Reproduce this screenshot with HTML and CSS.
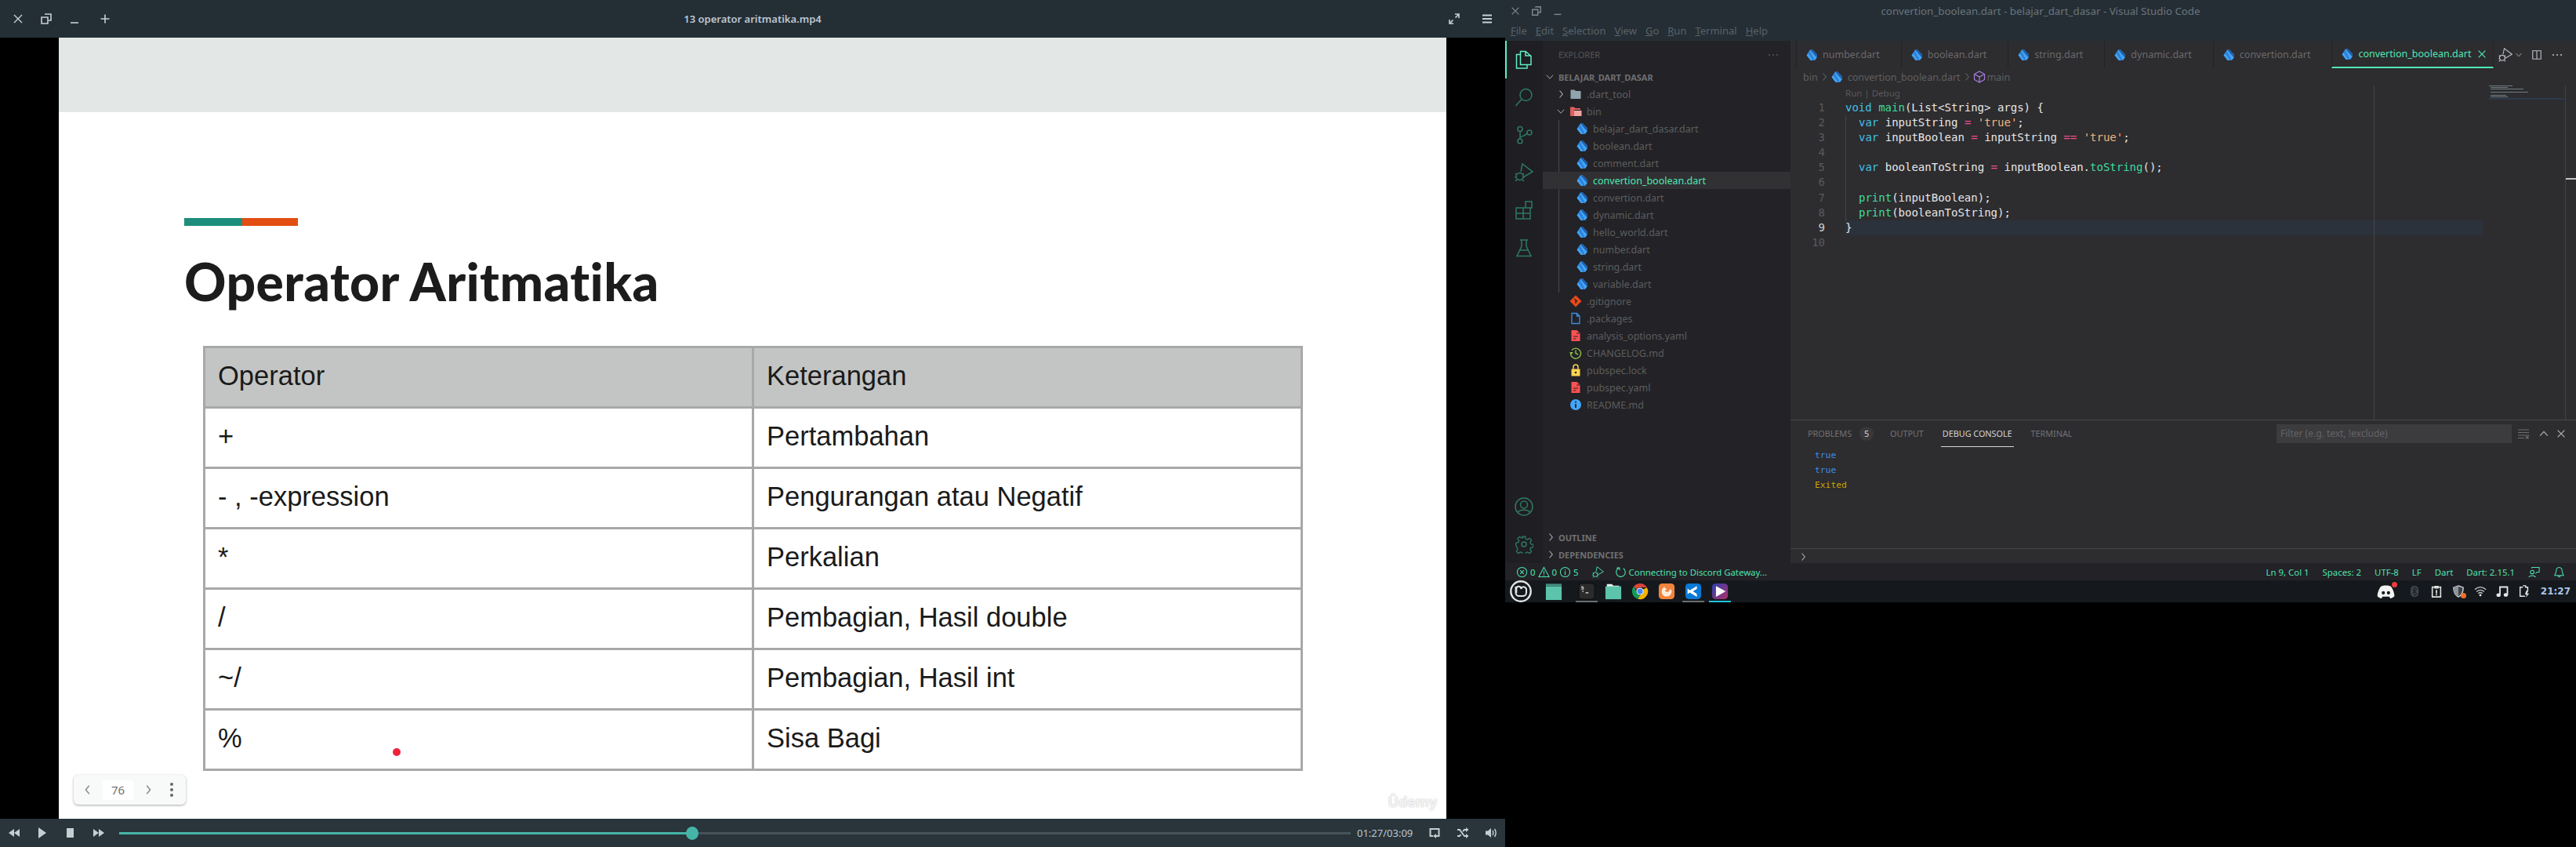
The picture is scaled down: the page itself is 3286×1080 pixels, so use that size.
FILE: index.html
```html
<!DOCTYPE html>
<html lang="en">
<head>
  <meta charset="UTF-8" />
  <title>Desktop - video player and VS Code</title>
  <link rel="stylesheet" href="styles.css">
</head>
<body>
  <svg class="icon-defs" xmlns="http://www.w3.org/2000/svg">
    <defs>
      <linearGradient id="playerGrad" x1="0" y1="0" x2="1" y2="1"><stop offset="0" stop-color="#2a3fb0"/><stop offset="1" stop-color="#b0306a"/></linearGradient>
      <symbol id="i-dart" viewBox="0 0 16 16">
        <path fill="#42a5f5" d="M1.5 8.5 6 1.5h3l5.5 5.5v4.5L12 15H6.5z"/>
        <path fill="#1f5fae" d="M6 1.5h3l5.5 5.5v4.5z"/>
        <path fill="#2f7fd6" d="M5.5 3 12 15H9.5L3.5 6z"/>
      </symbol>
      <symbol id="i-x" viewBox="0 0 16 16"><path d="M3 3l10 10M13 3 3 13" fill="none" stroke="currentColor" stroke-width="1.4"/></symbol>
      <symbol id="i-restore" viewBox="0 0 16 16"><path d="M6 2h8v8h-3M2 6h8v8H2z" fill="none" stroke="currentColor" stroke-width="1.6"/></symbol>
      <symbol id="i-min" viewBox="0 0 16 16"><path d="M3 13h10" stroke="currentColor" stroke-width="1.6"/></symbol>
      <symbol id="i-plus" viewBox="0 0 16 16"><path d="M8 2.5v11M2.5 8h11" stroke="currentColor" stroke-width="1.6"/></symbol>
      <symbol id="i-expand" viewBox="0 0 16 16"><path d="M9 2h5v5M7 14H2V9M14 2 9.5 6.5M2 14l4.500-4.500" fill="none" stroke="currentColor" stroke-width="1.6"/></symbol>
      <symbol id="i-burger" viewBox="0 0 16 16"><path d="M2 3.500h12M2 8h12M2 12.500h12" stroke="currentColor" stroke-width="2"/></symbol>
      <symbol id="i-rew" viewBox="0 0 16 16"><path fill="currentColor" d="M8 3v10L1 8zM15 3v10L8 8z"/></symbol>
      <symbol id="i-fwd" viewBox="0 0 16 16"><path fill="currentColor" d="M1 3v10l7-5zM8 3v10l7-5z"/></symbol>
      <symbol id="i-play" viewBox="0 0 16 16"><path fill="currentColor" d="M3 1v14l10-7z"/></symbol>
      <symbol id="i-stop" viewBox="0 0 16 16"><path fill="currentColor" d="M3 2h9v12H3z"/></symbol>
      <symbol id="i-repeat" viewBox="0 0 16 16"><path d="M6 12H2.500V3h11v9H9" fill="none" stroke="currentColor" stroke-width="2"/><path fill="currentColor" d="M10 9v6l-4-3z"/></symbol>
      <symbol id="i-shuffle" viewBox="0 0 16 16"><path d="M1 4h3l6 8h3M1 12h3l1.500-2M8 6l2-2h3" fill="none" stroke="currentColor" stroke-width="1.800"/><path fill="currentColor" d="M12 1v6l3.500-3zM12 9v6l3.500-3z"/></symbol>
      <symbol id="i-volume" viewBox="0 0 16 16"><path fill="currentColor" d="M1 5.500h3L8 2v12l-4-3.500H1z"/><path d="M10 5c1 2 1 4 0 6M12.500 3c2 3 2 7 0 10" fill="none" stroke="currentColor" stroke-width="1.500"/></symbol>
      <symbol id="i-left" viewBox="0 0 16 16"><path d="M10 2 5 8l5 6" fill="none" stroke="currentColor" stroke-width="1.500"/></symbol>
      <symbol id="i-right" viewBox="0 0 16 16"><path d="m6 2 5 6-5 6" fill="none" stroke="currentColor" stroke-width="1.500"/></symbol>
      <symbol id="i-down" viewBox="0 0 16 16"><path d="m2.500 5 5.500 6 5.500-6" fill="none" stroke="currentColor" stroke-width="1.300"/></symbol>
      <symbol id="i-up" viewBox="0 0 16 16"><path d="m2.500 11 5.500-6 5.500 6" fill="none" stroke="currentColor" stroke-width="1.300"/></symbol>
      <symbol id="i-files" viewBox="0 0 24 24"><path d="M14 1.500H7.500v17H21V7.500zM14 1.500v5.500h7M7.500 5.500H2.500V23H16v-4.500" fill="none" stroke="currentColor" stroke-width="1.500"/></symbol>
      <symbol id="i-search" viewBox="0 0 24 24"><circle cx="14.500" cy="9" r="7.500" fill="none" stroke="currentColor" stroke-width="1.500"/><path d="M9 14.500 1.500 23" stroke="currentColor" stroke-width="1.500"/></symbol>
      <symbol id="i-scm" viewBox="0 0 24 24"><g fill="none" stroke="currentColor" stroke-width="1.500"><circle cx="7" cy="4.500" r="3"/><circle cx="7" cy="20" r="3"/><circle cx="19" cy="9" r="3"/><path d="M7 7.500V17M16 9c-1 4-5 4-9 6"/></g></symbol>
      <symbol id="i-debug" viewBox="0 0 24 24"><g fill="none" stroke="currentColor" stroke-width="1.500"><path d="M8 11 10 1l13 10-12 7"/><circle cx="6.500" cy="17" r="4.500"/><path d="M1 13l2 2M12 13l-2 2M.5 18H2M11 18h1.500M1 23l2-2M12 23l-2-2"/></g></symbol>
      <symbol id="i-ext" viewBox="0 0 24 24"><path d="M2 9h9v14H2zM2 16h18v7h-9M11 9v7h9V9h-9M14 1h8v8h-8z" fill="none" stroke="currentColor" stroke-width="1.500"/></symbol>
      <symbol id="i-flask" viewBox="0 0 24 24"><path d="M7 2h10M9 2v8L3 22.500h18L15 10V2M6.500 15h11" fill="none" stroke="currentColor" stroke-width="1.500"/></symbol>
      <symbol id="i-account" viewBox="0 0 24 24"><g fill="none" stroke="currentColor" stroke-width="1.500"><circle cx="12" cy="12" r="11"/><circle cx="12" cy="9.500" r="4.500"/><path d="M4 20c2-5 14-5 16 0"/></g></symbol>
      <symbol id="i-gear" viewBox="0 0 24 24"><g fill="none" stroke="currentColor" stroke-width="1.500"><circle cx="12" cy="12" r="3"/><path d="M10 1h4l.7 3.400 2.300 1 3-1.900 2.700 2.800-1.900 3 .9 2.300 3.300.7v4l-3.300.6-1 2.300 2 3-2.800 2.700-3-1.900-2.300.9-.6 3.400h-4l-.7-3.400-2.300-1-3 1.900-2.700-2.800 1.900-3-.9-2.300L.700 14v-4l3.300-.6 1-2.300-2-3L5.800 1.300l3 1.900 2.300-.9z" transform="translate(1.200 1.200) scale(.9)"/></g></symbol>
      <symbol id="i-split" viewBox="0 0 16 16"><path d="M2 2h12v12H2zM8 2v12" fill="none" stroke="currentColor" stroke-width="1.300"/></symbol>
      <symbol id="i-dots" viewBox="0 0 16 16"><g fill="currentColor"><circle cx="3" cy="8" r="1.100"/><circle cx="8" cy="8" r="1.100"/><circle cx="13" cy="8" r="1.100"/></g></symbol>
      <symbol id="i-cube" viewBox="0 0 16 16"><path d="M8 1 14.500 4.500v7L8 15l-6.500-3.500v-7zM1.500 4.500 8 8l6.500-3.500M8 8v7" fill="none" stroke="#a97de0" stroke-width="1.200"/></symbol>
      <symbol id="i-clear" viewBox="0 0 16 16"><path d="M1 3h14M1 6.500h14M1 10h14M1 13.500h8" stroke="currentColor" stroke-width="1"/><path d="m11 11 3.500 3.500M14.500 11 11 14.500" stroke="currentColor" stroke-width="1.200"/></symbol>
      <symbol id="i-error" viewBox="0 0 16 16"><circle cx="8" cy="8" r="6.500" fill="none" stroke="currentColor" stroke-width="1.100"/><path d="m5.500 5.500 5 5M10.500 5.500l-5 5" stroke="currentColor" stroke-width="1.100"/></symbol>
      <symbol id="i-warn" viewBox="0 0 16 16"><path d="M8 1.500 15 14.500H1zM8 6v5M8 12v1.300" fill="none" stroke="currentColor" stroke-width="1.100"/></symbol>
      <symbol id="i-info" viewBox="0 0 16 16"><circle cx="8" cy="8" r="6.500" fill="none" stroke="currentColor" stroke-width="1.100"/><path d="M8 7v5M8 4.300v1.400" stroke="currentColor" stroke-width="1.200"/></symbol>
      <symbol id="i-sync" viewBox="0 0 16 16"><path d="M6 2.200a6.200 6.200 0 1 0 5.500.8M2.500 2.500l3.500-.5.600 3.500" fill="none" stroke="currentColor" stroke-width="1.200"/></symbol>
      <symbol id="i-feedback" viewBox="0 0 16 16"><g fill="none" stroke="currentColor" stroke-width="1.100"><circle cx="5.500" cy="8" r="2.500"/><path d="M1 15c.5-3 8-3 9 0M5 3V1.500h10V8h-3l-2 2"/></g></symbol>
      <symbol id="i-bell" viewBox="0 0 16 16"><path d="M8 1.500C5 1.500 4 4 4 6.500c0 3-2 5-2 6h12c0-1-2-3-2-6 0-2.500-1-5-4-5zM6.500 13c0 2 3 2 3 0" fill="none" stroke="currentColor" stroke-width="1.100"/></symbol>
      <symbol id="i-folder" viewBox="0 0 16 16"><path fill="#90a4ae" d="M1.500 2.500h5L8 4h6.500v10h-13z"/></symbol>
      <symbol id="i-folder-open" viewBox="0 0 16 16"><path fill="#d9605c" d="M1 2.500h5L7.500 4H14v2H6v8H1z"/><path fill="#f3a3a0" d="M6 7h9.500v7H6z"/></symbol>
      <symbol id="i-git" viewBox="0 0 16 16"><path fill="#e64a19" d="M8 .5 15.500 8 8 15.500.5 8z"/><path d="M6.500 5 8 6.500v4.500M8 6.500l2 2" stroke="#232226" stroke-width="1.200" fill="none"/></symbol>
      <symbol id="i-file" viewBox="0 0 16 16"><path d="M3 1.500h6.500l3.500 3.500v9.500H3zM9.500 1.500V5H13" fill="none" stroke="#3d8fdc" stroke-width="1.300"/></symbol>
      <symbol id="i-yaml" viewBox="0 0 16 16"><path fill="#ff5252" d="M2.500 1h7l4 4v10h-11z"/><path d="M5 9h6M5 12h3.500M9 5h4" stroke="#232226" stroke-width="1.100"/></symbol>
      <symbol id="i-history" viewBox="0 0 16 16"><path d="M3 4.500a6.500 6.500 0 1 1-1.500 4M8 4.500V8.500l3 1.500" fill="none" stroke="#8bc34a" stroke-width="1.400"/><path fill="#8bc34a" d="M0 7h5L2.500 10z"/></symbol>
      <symbol id="i-lock" viewBox="0 0 16 16"><path fill="#ffd54f" d="M2.500 6.500h11v9h-11z"/><path d="M5 6.500V4a3 3 0 0 1 6 0v2.500" fill="none" stroke="#ffd54f" stroke-width="1.500"/><circle cx="8" cy="11" r="1.300" fill="#232226"/></symbol>
      <symbol id="i-readme" viewBox="0 0 16 16"><circle cx="8" cy="8" r="7" fill="#42a5f5"/><path d="M8 7v5M8 3.700v1.800" stroke="#232226" stroke-width="1.800"/></symbol>
      <symbol id="i-mint" viewBox="0 0 28 28"><circle cx="14" cy="14" r="12.700" fill="#15191d" stroke="#e4e4e4" stroke-width="2.400"/><path d="M7.500 8v7.500a4.500 4.500 0 0 0 4.500 4.500h4.500a4.500 4.500 0 0 0 4.500-4.500v-3a3 3 0 0 0-6.700-1.500 3 3 0 0 0-6-.5V16" fill="none" stroke="#e4e4e4" stroke-width="2"/></symbol>
      <symbol id="i-window" viewBox="0 0 24 24"><path fill="#5cc4ab" d="M1 5h22v19H1z"/><path fill="#43907f" d="M1 1.500h22V5H1z"/></symbol>
      <symbol id="i-term" viewBox="0 0 24 24"><rect x="1" y="1" width="22" height="22" rx="4" fill="#2b2b2b" stroke="#0c0c0c"/><path d="M6 12h1.500M10.500 14h4" stroke="#e8e8e8" stroke-width="1.400"/><path d="M4.500 5.500h3M4.500 7h3v2h-3" fill="none" stroke="#e8e8e8" stroke-width="1"/></symbol>
      <symbol id="i-folder-app" viewBox="0 0 24 24"><path fill="#e8f5f0" d="M3 2h7l2 2h8v3H3z"/><path fill="#5cc4ab" d="M1 5h22v18H1z"/></symbol>
      <symbol id="i-chrome" viewBox="0 0 24 24"><path fill="#db4437" d="M12 1a11 11 0 0 1 9.500 5.500H12a5.500 5.500 0 0 0-5 3L3.500 5A11 11 0 0 1 12 1z"/><path fill="#0f9d58" d="M3.500 5 7 11.500a5.500 5.500 0 0 0 5 6L9 22.700A11 11 0 0 1 3.500 5z"/><path fill="#f4b400" d="M21.500 6.500A11 11 0 0 1 9 22.700l3-5.200a5.500 5.500 0 0 0 4-8z"/><circle cx="12" cy="12" r="5" fill="#fff"/><circle cx="12" cy="12" r="3.900" fill="#4285f4"/></symbol>
      <symbol id="i-firefox" viewBox="0 0 24 24"><rect x="1" y="1" width="22" height="22" rx="5" fill="#f0843c"/><path d="M19 12a7 7 0 1 1-9-6.500c-1.500 2 0 3 3 3-1 1-2 1-3 2 0 2 2 3 4 2 1-.5 1.500-1 1.500-2 1 0 2-1 1.500-2 1 1 2 2 2 3.500z" fill="#fdeadb"/></symbol>
      <symbol id="i-code" viewBox="0 0 24 24"><rect x="1" y="1" width="22" height="22" rx="5" fill="#0a78d6"/><path d="M17 4.500v15l-10-6-3 2.500V8l3 2.500zM17 8.500 11.500 12l5.500 3.500z" fill="#fff" fill-rule="evenodd"/></symbol>
      <symbol id="i-player" viewBox="0 0 24 24"><rect x="1" y="1" width="22" height="22" rx="5" fill="url(#playerGrad)"/><path d="M6.500 4.500v15L20 12z" fill="#fff"/></symbol>
      <symbol id="i-discord" viewBox="0 0 24 18"><path fill="#f2f2f2" d="M5 2c4-2 10-2 14 0 3 4 4.500 9 4.500 13-1.500 1.500-3.500 2.500-5.500 3l-1.500-2.500h-9L6 18c-2-.5-4-1.500-5.500-3C.5 11 2 6 5 2z"/><circle cx="8.500" cy="10.500" r="2.200" fill="#15191d"/><circle cx="15.500" cy="10.500" r="2.200" fill="#15191d"/></symbol>
      <symbol id="i-bt" viewBox="0 0 16 20"><rect x="1.500" y="1" width="13" height="18" rx="6.500" fill="#3d4449"/><path d="m4.500 6.500 7 7L8 17V3l3.500 3.500-7 7" fill="none" stroke="#15191d" stroke-width="1.200"/></symbol>
      <symbol id="i-clip" viewBox="0 0 16 18"><path d="M2 3h12v14H2z" fill="none" stroke="#e0e0e0" stroke-width="1.800"/><path fill="#e0e0e0" d="M5 1h6v4H5zM7 7h2v5H7zM7 13h2v2H7z"/></symbol>
      <symbol id="i-shield" viewBox="0 0 18 18"><path d="M9 1 16 3.500c0 6-2 11-7 13.500C4 14.500 2 9.500 2 3.500z" fill="#3d4449" stroke="#d8d8d8" stroke-width="1.500"/><path d="M9 1v16C4 14.500 2 9.500 2 3.500z" fill="#8a9499"/></symbol>
      <symbol id="i-wifi" viewBox="0 0 18 16"><path d="M1 5.500c5-4.500 11-4.500 16 0M3.500 8.500c3.500-3 7.500-3 11 0M6 11c2-1.700 4-1.700 6 0" fill="none" stroke="#c4c4c4" stroke-width="1.500"/><circle cx="9" cy="13.500" r="1.600" fill="#e6e6e6"/></symbol>
      <symbol id="i-music" viewBox="0 0 16 16"><path d="M5 12V2.500h9.500V12" fill="none" stroke="#e6e6e6" stroke-width="1.800"/><ellipse cx="3.200" cy="12.800" rx="2.700" ry="2.300" fill="#e6e6e6"/><ellipse cx="12.500" cy="12.500" rx="2.700" ry="2.300" fill="#e6e6e6"/></symbol>
      <symbol id="i-battery" viewBox="0 0 16 18"><path d="M6 1h4v2h3v5M9 16H2V3h4" fill="none" stroke="#e6e6e6" stroke-width="1.600"/><path fill="#e6e6e6" d="M11 8h3l-2 4h3l-5 6 1.500-4.500H9z"/></symbol>
    </defs>
  </svg>

  <!-- video player window -->
  <main class="player">
    <header class="player-bar">
      <div class="player-actions">
        <svg class="ico16"><use href="#i-x"/></svg>
        <svg class="ico16"><use href="#i-restore"/></svg>
        <svg class="ico16"><use href="#i-min"/></svg>
        <svg class="ico16 action-plus"><use href="#i-plus"/></svg>
      </div>
      <div class="player-title">13 operator aritmatika.mp4</div>
      <div class="player-actions player-actions-end">
        <svg class="ico16"><use href="#i-expand"/></svg>
        <svg class="ico16"><use href="#i-burger"/></svg>
      </div>
    </header>

    <div class="stage">
      <div class="slide">
        <div class="slide-band"></div>
        <div class="slide-body">
          <div class="accent"><span class="accent-teal"></span><span class="accent-orange"></span></div>
          <h1 class="slide-title">Operator Aritmatika</h1>
          <table class="op-table">
            <tr class="head"><td class="col-op">Operator</td><td>Keterangan</td></tr>
            <tr><td>+</td><td>Pertambahan</td></tr>
            <tr><td>- , -expression</td><td>Pengurangan atau Negatif</td></tr>
            <tr><td>*</td><td>Perkalian</td></tr>
            <tr><td>/</td><td>Pembagian, Hasil double</td></tr>
            <tr><td>~/</td><td>Pembagian, Hasil int</td></tr>
            <tr><td>%</td><td>Sisa Bagi</td></tr>
          </table>
        </div>
        <span class="laser"></span>
        <div class="page-pill">
          <svg class="pill-arrow"><use href="#i-left"/></svg>
          <span class="pill-num">76</span>
          <svg class="pill-arrow"><use href="#i-right"/></svg>
          <span class="pill-more"><i></i><i></i><i></i></span>
        </div>
        <span class="watermark">Ûdemy</span>
      </div>
    </div>

    <footer class="controls">
      <div class="transport">
        <svg class="ico16"><use href="#i-rew"/></svg>
        <svg class="ico16"><use href="#i-play"/></svg>
        <svg class="ico16"><use href="#i-stop"/></svg>
        <svg class="ico16"><use href="#i-fwd"/></svg>
      </div>
      <div class="seek"><div class="seek-fill"></div><span class="seek-knob"></span></div>
      <span class="time">01:27/03:09</span>
      <div class="transport transport-end">
        <svg class="ico16"><use href="#i-repeat"/></svg>
        <svg class="ico16"><use href="#i-shuffle"/></svg>
        <svg class="ico16"><use href="#i-volume"/></svg>
      </div>
    </footer>
  </main>

  <!-- vs code window + panel -->
  <section class="desktop-right">
    <div class="code-window">
      <header class="code-titlebar">
        <div class="title-row">
          <div class="win-buttons">
            <svg class="ico14"><use href="#i-x"/></svg>
            <svg class="ico14"><use href="#i-restore"/></svg>
            <svg class="ico14"><use href="#i-min"/></svg>
          </div>
          <div class="win-title">convertion_boolean.dart - belajar_dart_dasar - Visual Studio Code</div>
          <div></div>
        </div>
        <nav class="menu">
          <span><u>F</u>ile</span><span><u>E</u>dit</span><span><u>S</u>election</span><span><u>V</u>iew</span><span><u>G</u>o</span><span><u>R</u>un</span><span><u>T</u>erminal</span><span><u>H</u>elp</span>
        </nav>
      </header>

      <div class="workbench">
        <aside class="activity">
          <div class="act act-on"><svg class="ico24"><use href="#i-files"/></svg></div>
          <div class="act"><svg class="ico24"><use href="#i-search"/></svg></div>
          <div class="act"><svg class="ico24"><use href="#i-scm"/></svg></div>
          <div class="act"><svg class="ico24"><use href="#i-debug"/></svg></div>
          <div class="act"><svg class="ico24"><use href="#i-ext"/></svg></div>
          <div class="act"><svg class="ico24"><use href="#i-flask"/></svg></div>
          <div class="act act-push"><svg class="ico24"><use href="#i-account"/></svg></div>
          <div class="act"><svg class="ico24"><use href="#i-gear"/></svg></div>
        </aside>

        <aside class="sidebar">
          <div class="side-head"><span>EXPLORER</span><svg class="ico16"><use href="#i-dots"/></svg></div>
          <div class="tree-row root"><svg class="chev"><use href="#i-down"/></svg><span>BELAJAR_DART_DASAR</span></div>
          <div class="tree-row lvl1"><svg class="chev"><use href="#i-right"/></svg><svg class="ico16"><use href="#i-folder"/></svg><span>.dart_tool</span></div>
          <div class="tree-row lvl1"><svg class="chev"><use href="#i-down"/></svg><svg class="ico16"><use href="#i-folder-open"/></svg><span>bin</span></div>
          <div class="tree-group">
            <div class="tree-row lvl2"><svg class="ico16"><use href="#i-dart"/></svg><span>belajar_dart_dasar.dart</span></div>
            <div class="tree-row lvl2"><svg class="ico16"><use href="#i-dart"/></svg><span>boolean.dart</span></div>
            <div class="tree-row lvl2"><svg class="ico16"><use href="#i-dart"/></svg><span>comment.dart</span></div>
            <div class="tree-row lvl2 tree-active"><svg class="ico16"><use href="#i-dart"/></svg><span>convertion_boolean.dart</span></div>
            <div class="tree-row lvl2"><svg class="ico16"><use href="#i-dart"/></svg><span>convertion.dart</span></div>
            <div class="tree-row lvl2"><svg class="ico16"><use href="#i-dart"/></svg><span>dynamic.dart</span></div>
            <div class="tree-row lvl2"><svg class="ico16"><use href="#i-dart"/></svg><span>hello_world.dart</span></div>
            <div class="tree-row lvl2"><svg class="ico16"><use href="#i-dart"/></svg><span>number.dart</span></div>
            <div class="tree-row lvl2"><svg class="ico16"><use href="#i-dart"/></svg><span>string.dart</span></div>
            <div class="tree-row lvl2"><svg class="ico16"><use href="#i-dart"/></svg><span>variable.dart</span></div>
          </div>
          <div class="tree-row flat"><svg class="ico16"><use href="#i-git"/></svg><span>.gitignore</span></div>
          <div class="tree-row flat"><svg class="ico16"><use href="#i-file"/></svg><span>.packages</span></div>
          <div class="tree-row flat"><svg class="ico16"><use href="#i-yaml"/></svg><span>analysis_options.yaml</span></div>
          <div class="tree-row flat"><svg class="ico16"><use href="#i-history"/></svg><span>CHANGELOG.md</span></div>
          <div class="tree-row flat"><svg class="ico16"><use href="#i-lock"/></svg><span>pubspec.lock</span></div>
          <div class="tree-row flat"><svg class="ico16"><use href="#i-yaml"/></svg><span>pubspec.yaml</span></div>
          <div class="tree-row flat"><svg class="ico16"><use href="#i-readme"/></svg><span>README.md</span></div>
          <div class="tree-row section section-first"><svg class="chev"><use href="#i-right"/></svg><span>OUTLINE</span></div>
          <div class="tree-row section"><svg class="chev"><use href="#i-right"/></svg><span>DEPENDENCIES</span></div>
        </aside>

        <div class="main-area">
          <div class="tabs">
            <div class="tab"><svg class="ico16"><use href="#i-dart"/></svg><span>number.dart</span></div>
            <div class="tab"><svg class="ico16"><use href="#i-dart"/></svg><span>boolean.dart</span></div>
            <div class="tab"><svg class="ico16"><use href="#i-dart"/></svg><span>string.dart</span></div>
            <div class="tab"><svg class="ico16"><use href="#i-dart"/></svg><span>dynamic.dart</span></div>
            <div class="tab"><svg class="ico16"><use href="#i-dart"/></svg><span>convertion.dart</span></div>
            <div class="tab tab-active"><svg class="ico16"><use href="#i-dart"/></svg><span>convertion_boolean.dart</span><svg class="tab-close"><use href="#i-x"/></svg></div>
            <div class="tab-tools">
              <svg class="ico18"><use href="#i-debug"/></svg>
              <svg class="ico10"><use href="#i-down"/></svg>
              <svg class="ico14 tool-split"><use href="#i-split"/></svg>
              <svg class="ico16 tool-dots"><use href="#i-dots"/></svg>
            </div>
          </div>

          <div class="crumbs">
            <span>bin</span><svg class="crumb-sep"><use href="#i-right"/></svg>
            <svg class="ico16"><use href="#i-dart"/></svg><span class="crumb-file">convertion_boolean.dart</span><svg class="crumb-sep"><use href="#i-right"/></svg>
            <svg class="ico16"><use href="#i-cube"/></svg><span>main</span>
          </div>

          <div class="editor">
            <div class="gutter">
              <div>1</div><div>2</div><div>3</div><div>4</div><div>5</div><div>6</div><div>7</div><div>8</div><div class="gutter-on">9</div><div>10</div>
            </div>
            <div class="code">
              <div class="lens">Run | Debug</div>
              <div class="ln"><span class="kw">void</span> <span class="fn">main</span>(List&lt;String&gt; args) {</div>
              <div class="indent">
                <div class="ln"><span class="kw">var</span> inputString <span class="op">=</span> <span class="str">'true'</span>;</div>
                <div class="ln"><span class="kw">var</span> inputBoolean <span class="op">=</span> inputString <span class="op">==</span> <span class="str">'true'</span>;</div>
                <div class="ln"></div>
                <div class="ln"><span class="kw">var</span> booleanToString <span class="op">=</span> inputBoolean.<span class="fn">toString</span>();</div>
                <div class="ln"></div>
                <div class="ln"><span class="fn">print</span>(inputBoolean);</div>
                <div class="ln"><span class="fn">print</span>(booleanToString);</div>
              </div>
              <div class="ln ln-on">}</div>
              <div class="ln"></div>
            </div>
            <div class="minimap">
              <i class="mm mm-1"></i><i class="mm mm-2"></i><i class="mm mm-3"></i><i class="mm mm-gap"></i><i class="mm mm-4"></i><i class="mm mm-gap"></i><i class="mm mm-5"></i><i class="mm mm-6"></i><i class="mm mm-cur"></i>
            </div>
            <div class="scroll-track"><span class="scroll-tick"></span></div>
            <span class="ruler"></span>
          </div>

          <div class="panel">
            <div class="panel-head">
              <span class="ptab">PROBLEMS</span><span class="pbadge">5</span>
              <span class="ptab ptab-output">OUTPUT</span>
              <span class="ptab ptab-on">DEBUG CONSOLE</span>
              <span class="ptab">TERMINAL</span>
              <div class="pfilter">Filter (e.g. text, !exclude)</div>
              <svg class="ico16 ptool-clear"><use href="#i-clear"/></svg>
              <svg class="ico14 ptool-up"><use href="#i-up"/></svg>
              <svg class="ico14 ptool-x"><use href="#i-x"/></svg>
            </div>
            <div class="console">
              <div class="out-true">true</div>
              <div class="out-true">true</div>
              <div class="out-exit">Exited</div>
            </div>
            <div class="console-input"><svg class="chev"><use href="#i-right"/></svg></div>
          </div>
        </div>
      </div>

      <footer class="status">
        <div class="status-left">
          <svg class="ico15"><use href="#i-error"/></svg><span>0</span>
          <svg class="ico15"><use href="#i-warn"/></svg><span>0</span>
          <svg class="ico15"><use href="#i-info"/></svg><span>5</span>
          <svg class="ico15 st-debug"><use href="#i-debug"/></svg>
          <svg class="ico15 st-sync"><use href="#i-sync"/></svg><span>Connecting to Discord Gateway...</span>
        </div>
        <div class="status-right">
          <span>Ln 9, Col 1</span><span>Spaces: 2</span><span>UTF-8</span><span>LF</span><span>Dart</span><span>Dart: 2.15.1</span>
          <svg class="ico15"><use href="#i-feedback"/></svg>
          <svg class="ico15"><use href="#i-bell"/></svg>
        </div>
      </footer>
    </div>

    <div class="taskbar">
      <div class="task-left">
        <span class="task-app"><svg class="ico28"><use href="#i-mint"/></svg></span>
        <span class="task-app"><svg class="ico22"><use href="#i-window"/></svg></span>
        <span class="task-app running"><svg class="ico22"><use href="#i-term"/></svg></span>
        <span class="task-app"><svg class="ico22"><use href="#i-folder-app"/></svg></span>
        <span class="task-app"><svg class="ico22"><use href="#i-chrome"/></svg></span>
        <span class="task-app"><svg class="ico22"><use href="#i-firefox"/></svg></span>
        <span class="task-app running"><svg class="ico22"><use href="#i-code"/></svg></span>
        <span class="task-app running running-on"><svg class="ico22"><use href="#i-player"/></svg></span>
      </div>
      <div class="tray">
        <span class="tray-item tray-discord"><svg class="tray-dc"><use href="#i-discord"/></svg><i class="tray-dot"></i></span>
        <span class="tray-item"><svg class="ico16"><use href="#i-bt"/></svg></span>
        <span class="tray-item"><svg class="ico16"><use href="#i-clip"/></svg></span>
        <span class="tray-item tray-shield"><svg class="ico16"><use href="#i-shield"/></svg><i class="tray-dot tray-dot-orange"></i></span>
        <span class="tray-item"><svg class="ico16"><use href="#i-wifi"/></svg></span>
        <span class="tray-item"><svg class="ico16"><use href="#i-music"/></svg></span>
        <span class="tray-item"><svg class="ico16"><use href="#i-battery"/></svg></span>
        <span class="clock">21:27</span>
      </div>
    </div>
  </section>
</body>
</html>
```
FILE: styles.css
```css
* {
  box-sizing: border-box;
}
html, body {
  margin: 0;
  padding: 0;
}
body {
  width: 3286px;
  height: 1080px;
  overflow: hidden;
  background: #000;
  display: flex;
  font-family: "Noto Sans", sans-serif;
}
svg {
  display: block;
  flex: none;
}
.icon-defs {
  width: 0;
  height: 0;
  overflow: hidden;
}
.ico10 { width: 10px; height: 10px; }
.ico14 { width: 14px; height: 14px; }
.ico15 { width: 15px; height: 15px; }
.ico16 { width: 16px; height: 16px; }
.ico18 { width: 18px; height: 18px; }
.ico22 { width: 22px; height: 22px; }
.ico24 { width: 24px; height: 24px; }
.ico28 { width: 28px; height: 28px; }

/* player */
.player {
  width: 1920px;
  height: 1080px;
  display: flex;
  flex-direction: column;
}
.player-bar {
  height: 48px;
  background: #242e35;
  color: #c7d0d6;
  display: grid;
  grid-template-columns: 1fr auto 1fr;
  align-items: center;
}
.player-actions {
  display: flex;
  gap: 20px;
  padding-left: 15px;
}
.action-plus {
  margin-left: 3px;
}
.player-actions-end {
  justify-content: flex-end;
  gap: 26px;
  padding: 0 15px 0 0;
}
.player-title {
  color: #bcc8d2;
  font-size: 13px;
  font-weight: 600;
}
.stage {
  flex: 1;
  padding: 0 75px;
}
.slide {
  position: relative;
  height: 100%;
  background: #fff;
}
.slide-band {
  height: 95px;
  background: #e3e8e7;
}
.slide-body {
  padding: 135px 0 0 160px;
}
.accent {
  display: flex;
  height: 10px;
}
.accent-teal {
  width: 74px;
  background: #1e8e7c;
}
.accent-orange {
  width: 71px;
  background: #e24e12;
}
.slide-title {
  margin: 31px 0 0;
  font-family: "Lato", sans-serif;
  font-size: 66px;
  line-height: 80px;
  font-weight: 900;
  font-variant-ligatures: none;
  letter-spacing: 0.43px;
  color: #1c1c1c;
}
.op-table {
  margin: 42px 0 0 24px;
  width: 1403px;
  border-collapse: collapse;
  table-layout: fixed;
  font-family: "Liberation Sans", Arial, sans-serif;
  font-size: 34.500px;
  color: #1a1a1a;
}
.op-table td {
  height: 77px;
  padding: 0 0 3px 16px;
  border: 3px solid #a8a8a8;
}
.op-table .col-op {
  width: 700px;
}
.op-table .head td {
  background: #c3c5c4;
}
.laser {
  position: absolute;
  left: 426px;
  top: 906px;
  width: 10px;
  height: 10px;
  border-radius: 50%;
  background: #ee2238;
}
.page-pill {
  position: absolute;
  left: 19px;
  top: 940px;
  width: 143px;
  height: 38px;
  padding: 0 0 0 11px;
  display: flex;
  align-items: center;
  gap: 12px;
  background: #f8f9f9;
  border-radius: 6px;
  box-shadow: 0 1px 3px rgba(0, 0, 0, 0.35);
  color: #7d8285;
}
.pill-arrow {
  width: 14px;
  height: 14px;
}
.pill-num {
  width: 39px;
  height: 25px;
  background: #fff;
  border-radius: 4px;
  font-size: 15px;
  line-height: 25px;
  text-align: center;
  color: #6e7275;
}
.pill-more {
  margin-left: 9px;
  display: flex;
  flex-direction: column;
  gap: 3px;
}
.pill-more i {
  width: 4px;
  height: 4px;
  border-radius: 50%;
  background: #66696c;
}
.watermark {
  position: absolute;
  right: 12px;
  top: 962px;
  font-size: 18px;
  font-weight: 600;
  color: #f4f4f4;
  text-shadow: 0 0 2px #b5b5b5;
}
.controls {
  height: 36px;
  background: #29343b;
  display: flex;
  align-items: center;
  color: #c5ced3;
}
.transport {
  display: flex;
  gap: 20px;
  padding-left: 10px;
}
.transport-end {
  margin-left: auto;
  padding: 0 10px 0 0;
}
.seek {
  position: relative;
  width: 1571px;
  height: 3px;
  margin-left: 18px;
  background: #47545b;
}
.seek-fill {
  width: 46.500%;
  height: 100%;
  background: #45b5a8;
}
.seek-knob {
  position: absolute;
  left: 46.500%;
  top: -7px;
  width: 16px;
  height: 17px;
  margin-left: -8px;
  border-radius: 50%;
  background: #45b5a8;
}
.time {
  margin-left: 8px;
  font-size: 13px;
  color: #bcc8d2;
}

/* right side */
.desktop-right {
  width: 1366px;
  height: 768px;
  display: flex;
  flex-direction: column;
}
.code-window {
  height: 740px;
  display: flex;
  flex-direction: column;
  background: #232226;
}
.code-titlebar {
  height: 52px;
  background: #252e35;
  color: #59636a;
}
.title-row {
  height: 27px;
  display: grid;
  grid-template-columns: 1fr auto 1fr;
  align-items: center;
}
.win-buttons {
  display: flex;
  gap: 13px;
  padding-left: 6px;
  color: #7f898f;
}
.win-title {
  font-size: 13.300px;
  color: #6a757c;
}
.menu {
  display: flex;
  gap: 11px;
  padding-left: 7px;
  font-size: 13px;
  line-height: 25px;
}
.workbench {
  flex: 1;
  min-height: 0;
  display: flex;
}
.activity {
  width: 48px;
  background: #1f1e22;
  display: flex;
  flex-direction: column;
}
.act {
  height: 48px;
  display: flex;
  align-items: center;
  justify-content: center;
  color: #2e7a60;
}
.act-on {
  color: #5ff0c0;
  border-left: 2px solid #5ff0c0;
  padding-right: 2px;
}
.act-push {
  margin-top: auto;
}
.sidebar {
  width: 316px;
  background: #232226;
  display: flex;
  flex-direction: column;
  font-size: 12.500px;
  color: #5c5e5e;
}
.side-head {
  height: 35px;
  padding: 0 14px 0 20px;
  display: flex;
  align-items: center;
  justify-content: space-between;
  font-size: 11px;
  color: #55565a;
}
.tree-row {
  height: 22px;
  display: flex;
  align-items: center;
  gap: 6px;
}
.chev {
  width: 12px;
  height: 12px;
  color: #a6b0b6;
}
.root {
  padding-left: 3px;
  gap: 5px;
  font-size: 11px;
  font-weight: 700;
  color: #6f6f72;
}
.lvl1 {
  padding-left: 17px;
}
.lvl1 .chev {
  margin-right: -1px;
}
.flat {
  padding-left: 34px;
}
.tree-group {
  margin-left: 20px;
  border-left: 1px solid #4a4a4c;
}
.tree-group .tree-row {
  margin-left: -21px;
}
.lvl2 {
  padding-left: 42px;
}
.tree-active {
  background: #313033;
  color: #4fe8b4;
}
.section {
  padding-left: 4px;
  gap: 4px;
  font-size: 11px;
  font-weight: 700;
  color: #707072;
}
.section-first {
  margin-top: auto;
}
.main-area {
  flex: 1;
  min-width: 0;
  background: #2d2c2f;
  display: flex;
  flex-direction: column;
}
.tabs {
  height: 35px;
  padding-left: 7px;
  display: flex;
  font-size: 12.500px;
  color: #6a6a6c;
}
.tab {
  height: 35px;
  padding: 0 27px 0 11px;
  display: flex;
  align-items: center;
  gap: 6px;
  border-left: 1px solid #232226;
}
.tab-active {
  padding-right: 7px;
  color: #4fe8b4;
  border-bottom: 2px solid #4fe8b4;
  border-right: 1px solid #232226;
}
.tab-close {
  width: 14px;
  height: 14px;
  margin-left: 1px;
}
.tab-tools {
  display: flex;
  align-items: center;
  gap: 3px;
  padding-left: 6px;
  color: #b6bcc4;
}
.tool-split {
  margin-left: 8px;
}
.tool-dots {
  margin-left: 8px;
}
.crumbs {
  height: 22px;
  padding-left: 16px;
  display: flex;
  align-items: center;
  gap: 2px;
  font-size: 12.500px;
  color: #5f6062;
}
.crumb-sep {
  width: 12px;
  height: 12px;
}
.crumb-file {
  margin-left: 4px;
}
.editor {
  position: relative;
  height: 426px;
  display: flex;
  font-family: "DejaVu Sans Mono", monospace;
  font-size: 14px;
  color: #e6e6e6;
}
.gutter {
  width: 70px;
  padding: 19px 26px 0 0;
  text-align: right;
  color: #5a5a5c;
}
.gutter div {
  height: 19.100px;
  line-height: 19.100px;
}
.gutter .gutter-on {
  color: #d4d4d4;
}
.code {
  width: 813px;
}
.lens {
  height: 19px;
  line-height: 19px;
  font-family: "Noto Sans", sans-serif;
  font-size: 11.500px;
  color: #5a5a5c;
}
.ln {
  height: 19.100px;
  line-height: 19.100px;
  white-space: pre;
}
.ln-on {
  background: #2b323c;
}
.indent {
  border-left: 1px solid #454547;
  padding-left: 16px;
}
.kw { color: #40c0e8; }
.fn { color: #3fdc9c; }
.op { color: #ee4f8c; }
.str { color: #f1b37c; }
.minimap {
  width: 97px;
  margin-left: 8px;
  padding-top: 0;
  display: flex;
  flex-direction: column;
  align-items: flex-start;
  gap: 1px;
}
.mm {
  display: block;
  height: 1px;
  background: #6f7d80;
}
.mm-1 { width: 30px; }
.mm-2 { width: 22px; margin-left: 2px; }
.mm-3 { width: 42px; margin-left: 2px; }
.mm-gap { width: 0; }
.mm-4 { width: 48px; margin-left: 2px; }
.mm-5 { width: 20px; margin-left: 2px; }
.mm-6 { width: 22px; margin-left: 2px; }
.mm-cur {
  width: 97px;
  height: 2px;
  background: #2c3a4c;
}
.scroll-track {
  position: relative;
  width: 14px;
  border-left: 1px solid #434345;
}
.scroll-tick {
  position: absolute;
  left: 0;
  top: 118px;
  width: 13px;
  height: 2px;
  background: #c4c4c4;
}
.ruler {
  position: absolute;
  left: 744px;
  top: 0;
  bottom: 0;
  width: 1px;
  background: #454547;
}
.panel {
  flex: 1;
  min-height: 0;
  border-top: 1px solid #48484a;
  display: flex;
  flex-direction: column;
}
.panel-head {
  height: 34px;
  padding-left: 22px;
  display: flex;
  align-items: center;
  font-size: 10.800px;
  color: #737374;
}
.ptab {
  height: 34px;
  line-height: 34px;
}
.pbadge {
  width: 18px;
  height: 18px;
  margin-left: 10px;
  border-radius: 50%;
  background: #39383b;
  color: #d5d5d5;
  text-align: center;
  line-height: 18px;
}
.ptab-output {
  margin-left: 21px;
}
.ptab-on {
  margin: 0 22px;
  padding: 0 2px;
  color: #d6d6d6;
  box-shadow: inset 0 -1px 0 #d6d6d6;
}
.pfilter {
  width: 300px;
  height: 24px;
  margin-left: auto;
  padding-left: 5px;
  background: #3c3b3e;
  font-size: 12px;
  line-height: 24px;
  color: #656567;
}
.ptool-clear {
  margin-left: 7px;
  color: #6d6d70;
}
.ptool-up {
  margin-left: 11px;
  color: #b4b4b6;
}
.ptool-x {
  margin: 0 12px 0 8px;
  color: #b4b4b6;
}
.console {
  height: 129px;
  padding: 1px 0 0 31px;
  font-family: "DejaVu Sans Mono", monospace;
  font-size: 11.300px;
  line-height: 19px;
}
.out-true { color: #3b8ee8; }
.out-exit { color: #c8a400; }
.console-input {
  flex: 1;
  padding: 4px 0 0 10px;
  border-top: 1px solid #48484a;
}
.status {
  height: 22px;
  display: flex;
  justify-content: space-between;
  background: #232226;
  color: #4ce3b0;
  font-size: 11.400px;
}
.status-left {
  display: flex;
  align-items: center;
  gap: 3px;
  padding-left: 14px;
}
.st-debug {
  margin-left: 14px;
}
.st-sync {
  margin-left: 11px;
}
.status-right {
  display: flex;
  align-items: center;
  gap: 17px;
  padding-right: 14px;
}
.taskbar {
  height: 28px;
  background: #15191d;
  display: flex;
  justify-content: space-between;
}
.task-left {
  display: flex;
  padding-left: 3px;
}
.task-app {
  position: relative;
  width: 34px;
  height: 28px;
  display: flex;
  align-items: center;
  justify-content: center;
}
.task-app:nth-child(-n+2) {
  margin-right: 8px;
}
.running::after {
  content: "";
  position: absolute;
  left: 3px;
  right: 3px;
  bottom: 0;
  height: 2px;
  background: #6a6e72;
}
.running-on::after {
  background: #1fc4e0;
}
.tray {
  display: flex;
  align-items: center;
  padding-right: 7px;
}
.tray-item {
  position: relative;
  width: 28px;
  display: flex;
  justify-content: center;
}
.tray-discord {
  margin-right: 8px;
}
.tray-dc {
  width: 23px;
  height: 17px;
}
.tray-dot {
  position: absolute;
  right: 0;
  top: -4px;
  width: 7px;
  height: 7px;
  border-radius: 50%;
  background: #ef3b3b;
}
.tray-dot-orange {
  right: 4px;
  top: 10px;
  background: #f0702a;
}
.clock {
  margin-left: 7px;
  font-family: "DejaVu Sans", sans-serif;
  font-size: 12px;
  font-weight: 700;
  color: #a9c6e6;
}
```
